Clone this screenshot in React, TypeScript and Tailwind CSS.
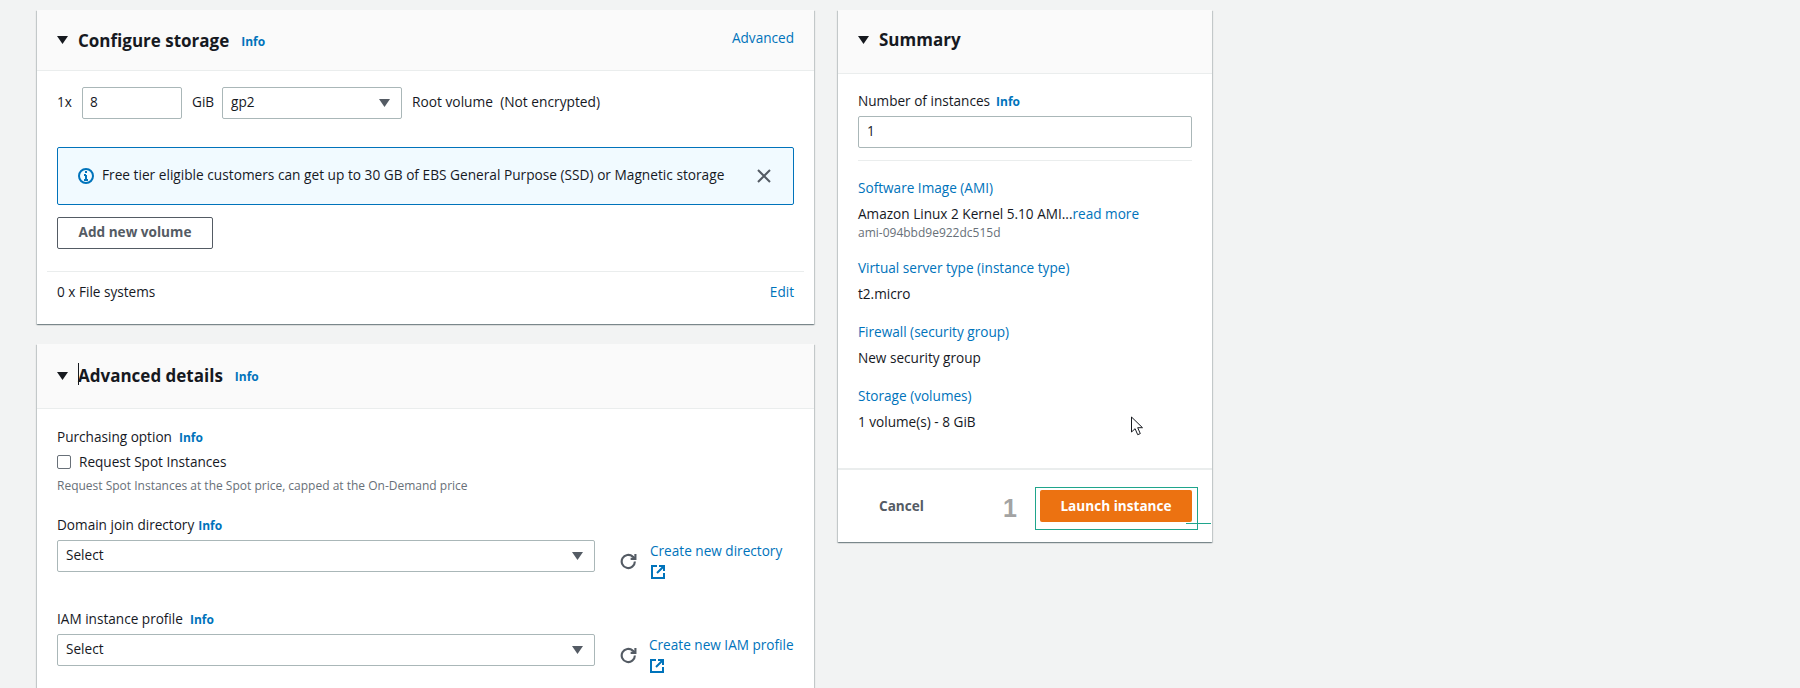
import React from "react";

const Info = ({ className = "" }: { className?: string }) => (
  <a className={`text-[12px] font-bold text-[#0073bb] ${className}`}>Info</a>
);

const Caret = () => (
  <svg width="11" height="8" viewBox="0 0 11 8" className="shrink-0">
    <path d="M0 0h11L5.5 8z" fill="#16191f" />
  </svg>
);

const SelectCaret = () => (
  <svg width="11" height="8" viewBox="0 0 11 8">
    <path d="M0 0h11L5.5 8z" fill="#545b64" />
  </svg>
);

const ExternalIcon = () => (
  <svg width="14" height="14" viewBox="0 0 14 14" fill="none" stroke="#0073bb" strokeWidth="2">
    <path d="M6 1H1v12h12V8" />
    <path d="M8 1h5v5M13 1 6 8" />
  </svg>
);

const RefreshIcon = () => (
  <svg width="17" height="17" viewBox="0 0 16 16" fill="none" stroke="#545b64" strokeWidth="2">
    <path d="M14 8a6.2 6.2 0 1 1-2-4.6L14 5" />
    <path d="M14.5 1v4.5H10" />
  </svg>
);

const Field = ({ value, className }: { value: string; className: string }) => (
  <div className={`flex h-[32px] items-center rounded-[2px] border border-[#aab7b8] bg-white pb-[2px] ${className}`}>
    {value}
  </div>
);

const SelectBox = ({ value, className }: { value: string; className: string }) => (
  <div className={`flex h-[32px] shrink-0 items-center justify-between rounded-[2px] border border-[#aab7b8] bg-white pl-[8px] pr-[11px] ${className}`}>
    <span className="pb-[1px]">{value}</span>
    <SelectCaret />
  </div>
);

const Card = ({ children, className = "" }: { children: React.ReactNode; className?: string }) => (
  <section className={`bg-white shadow-[0_1px_1px_0_rgba(0,28,36,0.3),1px_1px_1px_0_rgba(0,28,36,0.15),-1px_1px_1px_0_rgba(0,28,36,0.15)] ${className}`}>
    {children}
  </section>
);

const Header = ({ title, right, height, nudge, bar }: { title: string; right?: string; height: string; nudge?: string; bar?: boolean }) => (
  <header className={`flex items-center border-b border-[#eaeded] bg-[#fafafa] pl-[20px] pr-[20px] ${height}`}>
    <Caret />
    <h2 className={`relative ml-[10px] text-[17px] font-bold leading-[24px] text-[#16191f] ${nudge ?? ""}`}>
      {bar && <span className="absolute -top-[1px] left-0 h-[22px] w-px bg-[#16191f]" />}
      {title}
    </h2>
    <Info className={`ml-[12px] ${nudge ? "mt-[4px]" : "mt-[2px]"}`} />
    {right && <a className="ml-auto mb-[3px] text-[#0073bb]">{right}</a>}
  </header>
);

const SummaryRow = ({ label, value, sub, mt }: { label: string; value: React.ReactNode; sub?: string; mt: string }) => (
  <div className={mt}>
    <div className="leading-[20px] text-[#0073bb]">{label}</div>
    <div className="mt-[6px] leading-[20px]">{value}</div>
    {sub && <div className="text-[12px] leading-[18px] text-[#687078]">{sub}</div>}
  </div>
);

const PickerRow = ({ label, link, infoGap, linkOffset, mt }: { label: string; link: string; infoGap: string; linkOffset: string; mt: string }) => (
  <div className={mt}>
    <div className="flex items-baseline leading-[20px]">
      <span>{label}</span>
      <Info className={infoGap} />
    </div>
    <div className="mt-[4px] flex">
      <SelectBox value="Select" className="w-[538px]" />
      <div className="ml-[25px] mt-[13px] shrink-0">
        <RefreshIcon />
      </div>
      <div className={`flex flex-col ${linkOffset}`}>
        <a className="whitespace-nowrap leading-[22px] text-[#0073bb]">{link}</a>
        <div className="mt-[3px] pl-[1px]">
          <ExternalIcon />
        </div>
      </div>
    </div>
  </div>
);

export default function App() {
  return (
    <div className="relative h-[688px] w-[1800px] overflow-hidden bg-[#f2f3f3] font-['Open_Sans',sans-serif] text-[13.6px] text-[#16191f]">
      <div className="flex items-start gap-[24px] pl-[37px] pt-[10px]">
        <div className="w-[777px]">
          <Card>
            <Header title="Configure storage" right="Advanced" height="h-[61px]" nudge="mt-[2px]" />
            <div className="px-[20px] pt-[16px]">
              <div className="flex items-center">
                <span className="w-[25px] pb-[2px]">1x</span>
                <Field value="8" className="w-[100px] px-[7px]" />
                <span className="ml-[10px] w-[30px] pb-[2px]">GiB</span>
                <SelectBox value="gp2" className="w-[180px]" />
                <span className="ml-[10px] whitespace-pre pb-[2px] text-[13.75px]">Root volume  (Not encrypted)</span>
              </div>
              <div className="mt-[28px] flex h-[58px] items-center rounded-[2px] border border-[#0073bb] bg-[#f1faff] pl-[20px] pr-[22px]">
                <svg width="16" height="16" viewBox="0 0 16 16" fill="none" className="shrink-0">
                  <circle cx="8" cy="8" r="7" stroke="#0073bb" strokeWidth="2" />
                  <path d="M8 7v5M6 7h2M6 12h4" stroke="#0073bb" strokeWidth="2" />
                  <rect x="7" y="3" width="2" height="2" fill="#0073bb" />
                </svg>
                <span className="ml-[8px] pb-[2px] text-[13.7px]">Free tier eligible customers can get up to 30 GB of EBS General Purpose (SSD) or Magnetic storage</span>
                <svg width="14" height="14" viewBox="0 0 14 14" className="ml-auto" fill="none" stroke="#545b64" strokeWidth="2">
                  <path d="m1 1 12 12M13 1 1 13" />
                </svg>
              </div>
              <button className="mt-[12px] h-[32px] w-[156px] rounded-[2px] border border-[#545b64] bg-white pb-[1px] font-bold text-[#545b64]">
                Add new volume
              </button>
            </div>
            <div className="mx-[10px] mt-[22px] flex h-[53px] items-center justify-between border-t border-[#eaeded] px-[10px] pb-[11px]">
              <span>0 x File systems</span>
              <a className="text-[#0073bb]">Edit</a>
            </div>
          </Card>

          <Card className="mt-[20px] h-[400px]">
            <Header title="Advanced details" height="h-[65px]" bar />
            <div className="px-[20px] pt-[18px]">
              <div className="flex items-baseline leading-[20px]">
                <span>Purchasing option</span>
                <Info className="ml-[7px]" />
              </div>
              <label className="mt-[4px] flex h-[20px] items-center">
                <span className="h-[14px] w-[14px] rounded-[2px] border border-[#687078] bg-white" />
                <span className="ml-[8px]">Request Spot Instances</span>
              </label>
              <p className="mt-[5px] text-[12px] leading-[18px] text-[#687078]">
                Request Spot Instances at the Spot price, capped at the On-Demand price
              </p>
              <PickerRow label="Domain join directory" link="Create new directory" infoGap="ml-[4px]" linkOffset="ml-[13px]" mt="mt-[20px]" />
              <PickerRow label="IAM instance profile" link="Create new IAM profile" infoGap="ml-[7px]" linkOffset="ml-[12px]" mt="mt-[30px]" />
            </div>
          </Card>
        </div>

        <Card className="w-[374px]">
          <div className="flex h-[64px] items-center border-b border-[#eaeded] bg-[#fafafa] pb-[4px] pl-[20px]">
            <Caret />
            <h2 className="ml-[10px] text-[17px] font-bold leading-[24px]">Summary</h2>
          </div>
          <div className="px-[20px] pt-[17px]">
            <div className="flex items-baseline leading-[20px]">
              <span>Number of instances</span>
              <Info className="ml-[6px]" />
            </div>
            <Field value="1" className="mt-[4px] w-full px-[8px]" />
            <div className="mt-[12px] border-t border-[#eaeded]" />
            <SummaryRow
              label="Software Image (AMI)"
              mt="mt-[17px]"
              value={
                <>
                  Amazon Linux 2 Kernel 5.10 AMI...<a className="text-[#0073bb]">read more</a>
                </>
              }
              sub="ami-094bbd9e922dc515d"
            />
            <SummaryRow label="Virtual server type (instance type)" value="t2.micro" mt="mt-[16px]" />
            <SummaryRow label="Firewall (security group)" value="New security group" mt="mt-[18px]" />
            <SummaryRow label="Storage (volumes)" value="1 volume(s) - 8 GiB" mt="mt-[18px]" />
          </div>
          <div className="mt-[36px] flex h-[74px] items-center border-t-2 border-[#eaeded] pl-[41px]">
            <span className="font-bold text-[#545b64]">Cancel</span>
            <button className="ml-auto mr-[20px] h-[32px] w-[152px] rounded-[2px] bg-[#ec7211] font-bold text-white">
              Launch instance
            </button>
          </div>
        </Card>
      </div>

      {/* annotations drawn over the screenshot */}
      <span className="absolute left-[1003px] top-[494px] font-['Liberation_Sans',sans-serif] text-[25px] font-bold leading-[28px] text-[#a3a3a3]">1</span>
      <div className="absolute left-[1035px] top-[487px] h-[43px] w-[163px] border border-[#1fa58c]" />
      <div className="absolute left-[1186px] top-[523px] h-px w-[25px] bg-[#1fa58c]" />
      <svg width="14" height="20" viewBox="0 0 14 20" className="absolute left-[1130px] top-[416px]">
        <path d="M1.5 1v15l3.6-3.3 2.6 6 2.6-1.1-2.6-5.9h4.8z" fill="#fff" stroke="#16191f" strokeWidth="1" />
      </svg>
    </div>
  );
}
